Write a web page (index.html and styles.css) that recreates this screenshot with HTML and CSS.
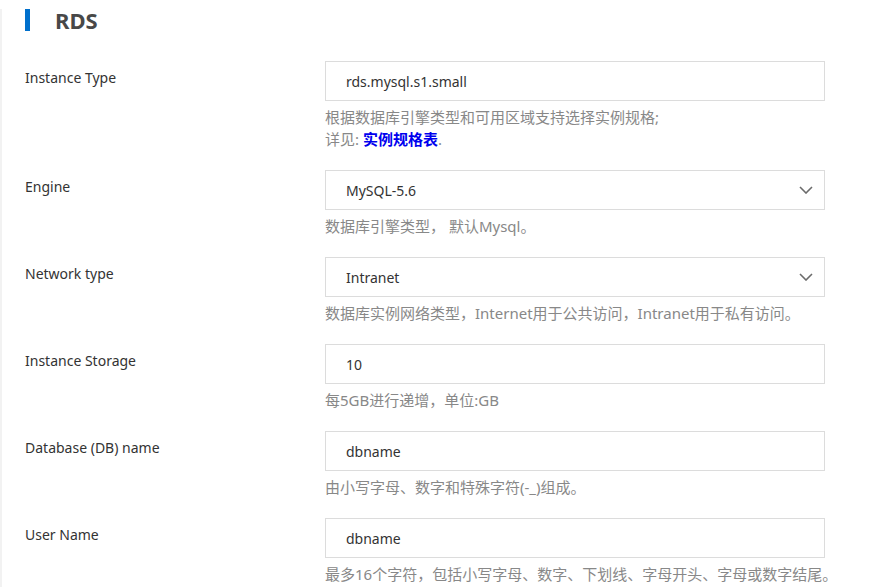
FILE: index.html
```html
<!DOCTYPE html>
<html lang="zh-CN">
<head>
<meta charset="utf-8">
<title>RDS</title>
<link rel="stylesheet" href="styles.css">
</head>
<body>
<div class="card">
  <div class="title"><span class="title-bar"></span><h2 class="title-text">RDS</h2></div>

  <div class="row">
    <div class="label">Instance Type</div>
    <div class="field">
      <div class="control">rds.mysql.s1.small</div>
      <div class="help">根据数据库引擎类型和可用区域支持选择实例规格;<br>详见: <a class="link" href="#">实例规格表</a>.</div>
    </div>
  </div>

  <div class="row">
    <div class="label">Engine</div>
    <div class="field">
      <div class="control select"><span>MySQL-5.6</span><svg class="chev" width="14" height="8" viewBox="0 0 14 8"><polyline points="1,1 7,7 13,1" fill="none" stroke="#6b6b6b" stroke-width="1.6"/></svg></div>
      <div class="help">数据库引擎类型， 默认Mysql。</div>
    </div>
  </div>

  <div class="row">
    <div class="label">Network type</div>
    <div class="field">
      <div class="control select"><span>Intranet</span><svg class="chev" width="14" height="8" viewBox="0 0 14 8"><polyline points="1,1 7,7 13,1" fill="none" stroke="#6b6b6b" stroke-width="1.6"/></svg></div>
      <div class="help">数据库实例网络类型，Internet用于公共访问，Intranet用于私有访问。</div>
    </div>
  </div>

  <div class="row">
    <div class="label">Instance Storage</div>
    <div class="field">
      <div class="control">10</div>
      <div class="help">每5GB进行递增，单位:GB</div>
    </div>
  </div>

  <div class="row">
    <div class="label">Database (DB) name</div>
    <div class="field">
      <div class="control">dbname</div>
      <div class="help">由小写字母、数字和特殊字符(-_)组成。</div>
    </div>
  </div>

  <div class="row">
    <div class="label">User Name</div>
    <div class="field">
      <div class="control">dbname</div>
      <div class="help">最多16个字符，包括小写字母、数字、下划线、字母开头、字母或数字结尾。</div>
    </div>
  </div>
</div>
</body>
</html>
```

FILE: styles.css
```css
html, body {
  margin: 0;
  padding: 0;
  background: #fff;
}
body {
  font-family: "Noto Sans", "Noto Sans CJK SC", sans-serif;
  font-size: 14px;
  color: #333;
  overflow: hidden;
}
.card {
  margin-top: 9px;
  border-left: 2px solid #f2f2f2;
  padding-left: 23px;
  min-height: 600px;
}
.title {
  display: flex;
  align-items: center;
  height: 22px;
  gap: 25px;
}
.title-bar {
  width: 5px;
  height: 22px;
  background: #0070cc;
}
.title-text {
  margin: 0;
  font-size: 22px;
  font-weight: 700;
  line-height: 22px;
  color: #484848;
}
.row {
  display: grid;
  grid-template-columns: 300px 500px;
  margin-top: 30px;
}
.row + .row {
  margin-top: 20px;
}
.label {
  padding-top: 6px;
  line-height: 21px;
  color: #333;
}
.control {
  box-sizing: border-box;
  height: 40px;
  border: 1px solid #dcdcdc;
  padding: 0 11px 0 20px;
  display: flex;
  align-items: center;
  justify-content: space-between;
  color: #333;
}
.help {
  margin-top: 5px;
  font-size: 15px;
  line-height: 22px;
  color: #888;
  white-space: nowrap;
}
.link {
  color: #0000ee;
  font-weight: 700;
  text-decoration: none;
}
.chev {
  display: block;
}
```
